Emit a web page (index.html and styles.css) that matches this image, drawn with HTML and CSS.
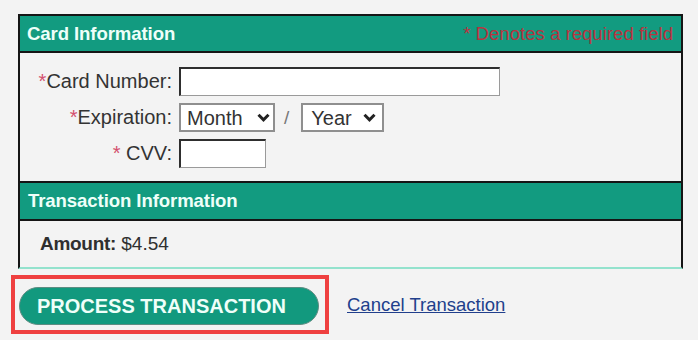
FILE: index.html
```html
<!DOCTYPE html>
<html>
<head>
<meta charset="utf-8">
<link rel="stylesheet" href="styles.css">
</head>
<body>
<div class="panel">
  <div class="panel-head">
    <span class="head-title">Card Information</span>
    <span class="head-note">* Denotes a required field</span>
  </div>
  <div class="card-body">
    <div class="row">
      <label class="lbl"><span class="req">*</span>Card Number:</label>
      <input class="txt txt-card" type="text">
    </div>
    <div class="row">
      <label class="lbl"><span class="req">*</span>Expiration:</label>
      <span class="sel sel-month">
        <select><option>Month</option></select>
        <svg class="chev" viewBox="0 0 13 9" width="13" height="9"><path d="M1.5 1.8 L6.5 6.8 L11.5 1.8" fill="none" stroke="#222" stroke-width="3"/></svg>
      </span>
      <span class="slash">/</span>
      <span class="sel sel-year">
        <select><option>Year</option></select>
        <svg class="chev" viewBox="0 0 13 9" width="13" height="9"><path d="M1.5 1.8 L6.5 6.8 L11.5 1.8" fill="none" stroke="#222" stroke-width="3"/></svg>
      </span>
    </div>
    <div class="row">
      <label class="lbl"><span class="req">*</span> CVV:</label>
      <input class="txt txt-cvv" type="text">
    </div>
  </div>
  <div class="panel-head panel-head-trans">
    <span class="head-title">Transaction Information</span>
  </div>
  <div class="amount-body">
    <span class="amount-line"><span class="amount-lbl">Amount:</span> <span class="amount-val">$4.54</span></span>
  </div>
</div>
<div class="actions">
  <div class="highlight">
    <button class="process" type="button">PROCESS TRANSACTION</button>
  </div>
  <a class="cancel" href="#">Cancel Transaction</a>
</div>
</body>
</html>
```
FILE: styles.css
```css
html, body {
  margin: 0;
  padding: 0;
  background: #f3f3f3;
}
body {
  padding-top: 14px;
  font-family: "Liberation Sans", Arial, sans-serif;
  color: #333;
}
.panel {
  margin-left: 18px;
  width: 665px;
  box-sizing: border-box;
  border: 2px solid #151515;
  border-bottom-color: #93e2cd;
  background: #f3f3f3;
}
.panel-head {
  height: 35px;
  background: #129b80;
  border-bottom: 2px solid #151515;
  display: flex;
  align-items: center;
  justify-content: space-between;
  padding: 0 8px 0 7px;
}
.panel-head-trans {
  height: 36px;
  border-top: 2px solid #151515;
  padding-left: 8px;
}
.head-title {
  color: #eefff9;
  font-weight: bold;
  font-size: 18.6px;
  letter-spacing: -0.1px;
}
.head-note {
  color: #b8333f;
  font-size: 18.6px;
}
.card-body {
  height: 128px;
  box-sizing: border-box;
  padding-top: 14px;
  display: flex;
  flex-direction: column;
  gap: 7px;
}
.row {
  display: flex;
  align-items: center;
  height: 29px;
}
.lbl {
  width: 152px;
  margin-right: 7px;
  text-align: right;
  font-size: 20px;
  color: #333;
  white-space: nowrap;
}
.req {
  color: #d4506e;
}
.txt {
  box-sizing: border-box;
  height: 29px;
  margin: 0;
  padding: 0;
  background: #fff;
  border-style: solid;
  border-width: 2px 1px 1px 2px;
  border-color: #2e2e2e #9a9a9a #9a9a9a #2e2e2e;
  font-family: inherit;
}
.txt-card {
  width: 321px;
}
.txt-cvv {
  width: 87px;
}
.sel {
  position: relative;
  display: inline-block;
  height: 29px;
}
.sel select {
  -webkit-appearance: none;
  appearance: none;
  box-sizing: border-box;
  height: 29px;
  margin: 0;
  padding: 0 0 0 6px;
  background: #fff;
  border: 2px solid #8f8f8f;
  border-radius: 0;
  font-family: "Liberation Sans", Arial, sans-serif;
  font-size: 20px;
  color: #333;
}
.sel-month select {
  width: 96px;
}
.sel-year select {
  width: 83px;
  padding-left: 8px;
}
.chev {
  position: absolute;
  top: 10px;
  pointer-events: none;
}
.sel-month .chev {
  left: 78px;
}
.sel-year .chev {
  left: 62px;
}
.slash {
  color: #777;
  font-size: 19px;
  margin: 0 12px 0 9px;
}
.amount-body {
  height: 46px;
  display: flex;
  align-items: center;
  padding-left: 20px;
  font-size: 19px;
  color: #2f2f2f;
}
.amount-line {
  white-space: pre;
}
.amount-lbl {
  font-weight: bold;
  letter-spacing: -0.3px;
}
.actions {
  display: flex;
  align-items: center;
  margin-top: 6px;
  margin-left: 11px;
}
.highlight {
  border: 4px solid #ef4040;
  padding: 8px 6px 5px 4px;
}
.process {
  display: block;
  width: 300px;
  height: 38px;
  box-sizing: border-box;
  margin: 0;
  padding: 0 0 0 17px;
  text-align: left;
  background: #12997e;
  border: 1px solid #5e8c82;
  border-radius: 19px;
  color: #effff9;
  font-family: "Liberation Sans", Arial, sans-serif;
  font-weight: bold;
  font-size: 20px;
}
.cancel {
  margin-left: 18px;
  color: #213f8c;
  font-size: 18.5px;
  text-decoration: underline;
}
```
